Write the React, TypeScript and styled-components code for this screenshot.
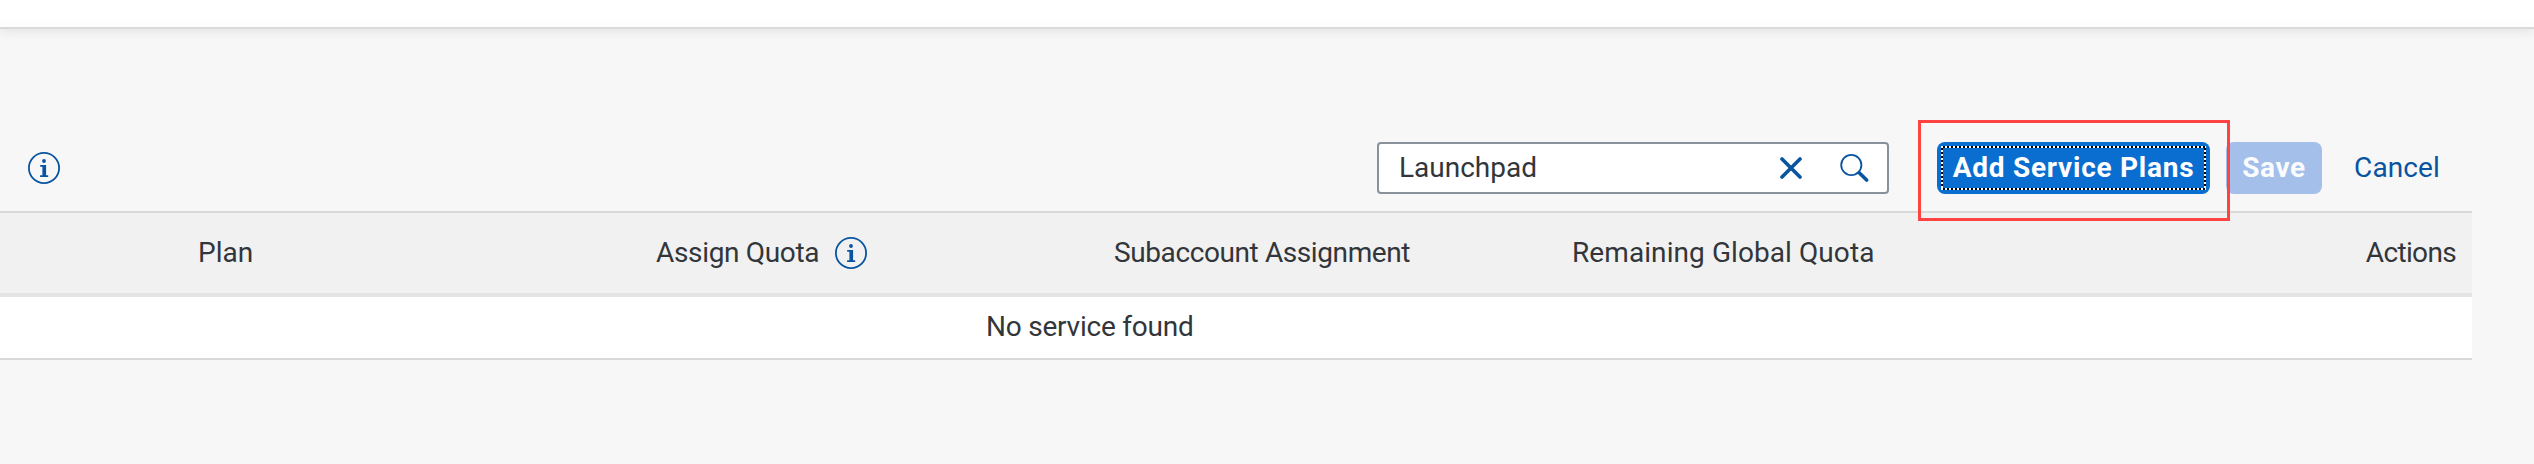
import React from 'react';
import styled, { createGlobalStyle } from 'styled-components';

const GlobalStyle = createGlobalStyle`
  *, *::before, *::after { box-sizing: border-box; }
  body {
    margin: 0;
    background: #f7f7f7;
    color: #32363a;
    font-family: Roboto, "Liberation Sans", sans-serif;
    font-size: 28px;
    overflow: hidden;
  }
`;

const Page = styled.div`
  display: flex;
  flex-direction: column;
  height: 464px;
  background: #f7f7f7;
`;

const ShellHeader = styled.header`
  height: 29px;
  flex: none;
  background: linear-gradient(#fff 18px, #fdfdfd 22px);
  border-bottom: 2px solid #d9d9d9;
  box-shadow: 0 0 14px rgba(0, 0, 0, 0.12);
`;

const Content = styled.main`
  width: 2472px;
  padding-top: 94px;
`;

const Toolbar = styled.div`
  display: flex;
  align-items: center;
  height: 88px;
  padding: 2px 0 0 28px;
`;

const Spacer = styled.div`
  flex: 1;
`;

const SearchField = styled.div`
  display: flex;
  align-items: center;
  width: 512px;
  height: 52px;
  padding: 0 18px 0 20px;
  border: 2px solid #89919a;
  border-radius: 4px;
  background: #fff;
`;

const Label = styled.span<{ $tracking?: number }>`
  white-space: nowrap;
  line-height: 36px;
  letter-spacing: ${(p) => p.$tracking ?? 0}px;
`;

const SearchText = styled(Label)`
  flex: 1;
`;

const Icon = styled.svg`
  display: block;
  flex: none;
  color: #0854a0;
`;

const Button = styled.button`
  display: flex;
  align-items: center;
  justify-content: center;
  position: relative;
  height: 52px;
  padding: 0;
  border: 0;
  border-radius: 8px;
  background: #0a6ed1;
  color: #fff;
  font: inherit;
  font-weight: 700;
`;

const AddButton = styled(Button)`
  width: 273px;
  margin-left: 48px;
`;

const SaveButton = styled(Button)`
  width: 96px;
  margin-left: 16px;
  background: #a3bfea;
  color: #fbfcfe;
`;

const CancelButton = styled(Button)`
  width: 118px;
  margin: 0 16px;
  background: transparent;
  color: #0854a0;
  font-weight: 400;
`;

const FocusRing = styled.span`
  position: absolute;
  inset: 4px;
  --dots-x: repeating-linear-gradient(90deg, #fff 0 2px, #000 2px 4px);
  --dots-y: repeating-linear-gradient(180deg, #fff 0 2px, #000 2px 4px);
  background:
    var(--dots-x) top / 100% 2px no-repeat,
    var(--dots-x) bottom / 100% 2px no-repeat,
    var(--dots-y) left / 2px 100% no-repeat,
    var(--dots-y) right / 2px 100% no-repeat;
`;

const Highlight = styled.span`
  position: absolute;
  z-index: 2;
  inset: -22px -20px -27px -19px;
  border: 3px solid #ff4343;
`;

const Table = styled.section`
  border-top: 2px solid #d9d9d9;
  border-bottom: 2px solid #d9d9d9;
`;

const HeaderRow = styled.div`
  display: grid;
  grid-template-columns: 182px 458px 458px 458px 458px 1fr;
  align-items: center;
  height: 84px;
  background: #f1f1f1;
  border-bottom: 4px solid #e4e4e4;
`;

const Cell = styled.div<{ $end?: boolean }>`
  display: flex;
  align-items: center;
  gap: 16px;
  padding: 0 16px;
  justify-content: ${(p) => (p.$end ? 'flex-end' : 'flex-start')};
`;

const EmptyRow = styled.div`
  display: flex;
  align-items: center;
  height: 61px;
  padding: 0 0 2px 986px;
  background: #fff;
`;

const InfoIcon = () => (
  <Icon width="32" height="32" viewBox="0 0 32 32" fill="none">
    <circle cx="16" cy="16" r="15.1" stroke="currentColor" strokeWidth="1.8" />
    <circle cx="16" cy="9" r="1.9" fill="currentColor" />
    <path d="M12.2 13h5.9v10.3h2.1V25h-8.1v-1.7h2.3v-8.6h-2.2z" fill="currentColor" />
  </Icon>
);

const ClearIcon = () => (
  <Icon width="22" height="22" viewBox="0 0 22 22" fill="none">
    <path d="M2 2l18 18M20 2L2 20" stroke="currentColor" strokeWidth="3.6" strokeLinecap="round" />
  </Icon>
);

const SearchIcon = styled(Icon)`
  margin-left: 38px;
`;

export default function App() {
  return (
    <>
      <GlobalStyle />
      <Page>
        <ShellHeader />
        <Content>
          <Toolbar>
            <InfoIcon />
            <Spacer />
            <SearchField>
              <SearchText>Launchpad</SearchText>
              <ClearIcon />
              <SearchIcon width="29" height="28" viewBox="0 0 29 28" fill="none">
                <circle cx="11.3" cy="11" r="10.1" stroke="currentColor" strokeWidth="1.8" />
                <path d="M19.2 18.8l7.4 7.2" stroke="currentColor" strokeWidth="3.6" strokeLinecap="round" />
              </SearchIcon>
            </SearchField>
            <AddButton>
              <Label $tracking={0.75}>Add Service Plans</Label>
              <FocusRing />
              <Highlight />
            </AddButton>
            <SaveButton disabled>
              <Label $tracking={0.6}>Save</Label>
            </SaveButton>
            <CancelButton>
              <Label $tracking={0.1}>Cancel</Label>
            </CancelButton>
          </Toolbar>
          <Table>
            <HeaderRow>
              <Cell />
              <Cell><Label>Plan</Label></Cell>
              <Cell><Label $tracking={-0.33}>Assign Quota</Label><InfoIcon /></Cell>
              <Cell><Label $tracking={-0.4}>Subaccount Assignment</Label></Cell>
              <Cell><Label $tracking={0.08}>Remaining Global Quota</Label></Cell>
              <Cell $end><Label $tracking={-0.65}>Actions</Label></Cell>
            </HeaderRow>
            <EmptyRow>
              <Label $tracking={-0.22}>No service found</Label>
            </EmptyRow>
          </Table>
        </Content>
      </Page>
    </>
  );
}
